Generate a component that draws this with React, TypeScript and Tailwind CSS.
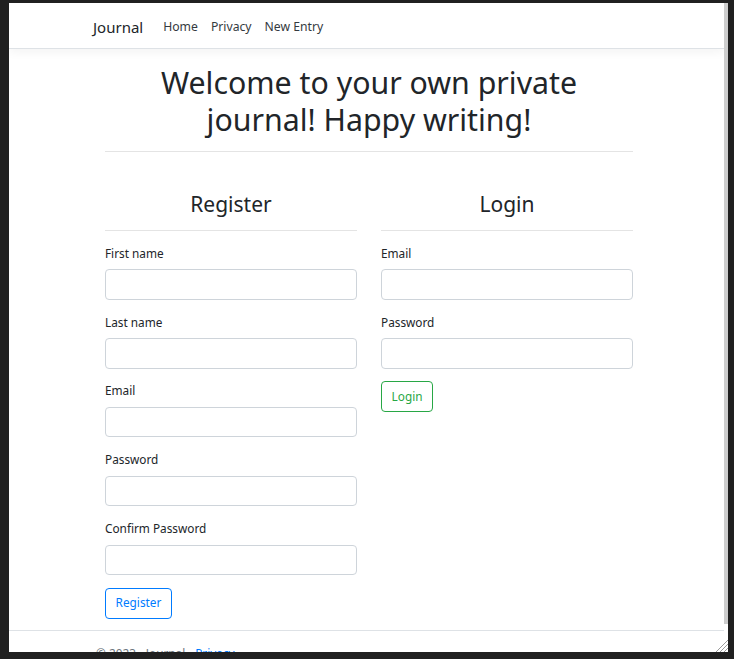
import React from "react";

// Bootstrap-ish journal landing page inside a dark window frame
function Field({ label, type = "text" }: { label: string; type?: string }) {
    return (
        <div className="mb-[12.8px]">
            <label className="block mb-[6.4px] text-[11.8px] leading-[19.2px] text-[#212529]">{label}</label>
            <input
                type={type}
                className="block w-full h-[30.4px] rounded-[4px] border border-[#ced4da] bg-white outline-none"
            />
        </div>
    );
}

function ColumnTitle({ children }: { children: React.ReactNode }) {
    return (
        <div className="mb-[13px]">
            <h2 className="text-center text-[21px] leading-[25.2px] text-[#212529] pt-[3.5px] pb-[12.1px] border-b border-[#e4e4e4]">
                {children}
            </h2>
        </div>
    );
}

export default function App() {
    return (
        <div className="w-screen h-screen bg-[#202020] pt-[3px] pl-[9px] font-['Noto_Sans',sans-serif]">
            <div className="relative w-[719px] h-[649px] bg-white flex overflow-hidden">
                <div className="w-[715px] flex flex-col">
                    {/* navbar */}
                    <nav className="h-[46px] shrink-0 border-b border-[#dee2e6] shadow-[0_3px_10px_rgba(0,0,0,0.05)] flex items-center pl-[84px] pt-[4px]">
                        <span className="text-[15px] text-[#212529] mr-[20px]">Journal</span>
                        <div className="flex gap-[13px] text-[12.2px] text-[#343a40]">
                            <a>Home</a>
                            <a>Privacy</a>
                            <a>New Entry</a>
                        </div>
                    </nav>

                    <main className="ml-[96px] w-[528px] pt-[14.7px]">
                        <h1 className="text-center text-[30.3px] leading-[37px] text-[#212529] pb-[13.3px] border-b border-[#e4e4e4]">
                            Welcome to your own private
                            <br />
                            journal! Happy writing!
                        </h1>

                        <div className="grid grid-cols-2 gap-[24px] mt-[37px]">
                            <div>
                                <ColumnTitle>Register</ColumnTitle>
                                <Field label="First name" />
                                <Field label="Last name" />
                                <Field label="Email" type="email" />
                                <Field label="Password" type="password" />
                                <Field label="Confirm Password" type="password" />
                                <button className="h-[31px] px-[9.6px] rounded-[4px] border border-[#007bff] text-[#007bff] text-[11.8px]">
                                    Register
                                </button>
                            </div>
                            <div>
                                <ColumnTitle>Login</ColumnTitle>
                                <Field label="Email" type="email" />
                                <Field label="Password" type="password" />
                                <button className="h-[31px] px-[9.6px] rounded-[4px] border border-[#28a745] text-[#28a745] text-[11.8px]">
                                    Login
                                </button>
                            </div>
                        </div>
                    </main>

                    <footer className="mt-[11px] border-t border-[#dee2e6] shrink-0">
                        <div className="ml-[87px] text-[11.8px] leading-[45px] text-[#6c757d]">
                            © 2023 - Journal - <a className="text-[#007bff]">Privacy</a>
                        </div>
                    </footer>
                </div>

                {/* scrollbar */}
                <div className="w-[4px] flex flex-col">
                    <div className="h-[621px] bg-[#cdcdcd]" />
                </div>

                {/* resize grip */}
                <svg className="absolute right-0 bottom-0" width="14" height="14" viewBox="0 0 14 14">
                    <path d="M14 2 L2 14 M14 6 L6 14 M14 10 L10 14" stroke="#9a9a9a" strokeWidth="1" />
                </svg>
            </div>
        </div>
    );
}
